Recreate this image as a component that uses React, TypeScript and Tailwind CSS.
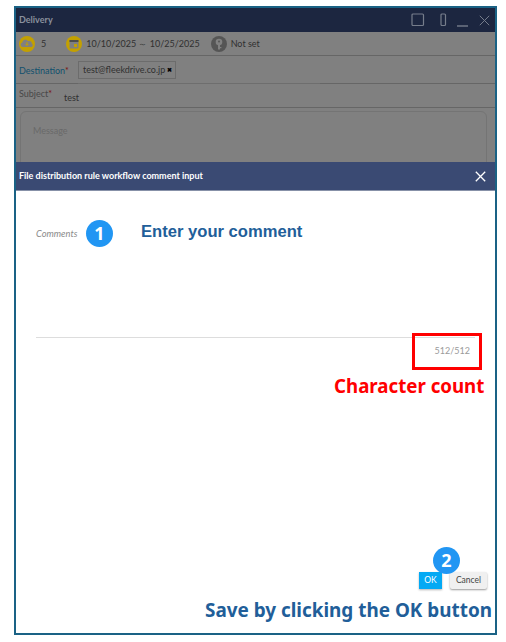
import React from "react";

const lato = "[font-family:Lato,'Noto_Sans',sans-serif]";
const note = "[font-family:'Noto_Sans','Noto_Sans_CJK_JP',sans-serif]";
const arial = "[font-family:'Liberation_Sans',Arial,sans-serif]";

function Badge({ n, className }: { n: string; className: string }) {
  return (
    <div className={`absolute w-[27px] h-[27px] rounded-full bg-[#2196f3] text-white flex items-center justify-center text-[18px] font-bold ${note} ${className}`}>
      {n}
    </div>
  );
}

export default function App() {
  return (
    <div className="w-[506px] h-[642px] bg-white pt-[6px] pl-[14px]">
      <div className={`relative w-[483px] h-[629px] border-2 border-[#1a6285] bg-white overflow-hidden ${lato}`}>
        {/* Dimmed window behind the dialog */}
        <div className="h-full bg-[#808080] flex flex-col">
          <div className="h-[24px] shrink-0 bg-[#1c2640] flex items-center pl-[3px] pr-[5px]">
            <span className="text-[9px] font-bold text-[#8a919d]">Delivery</span>
            <div className="ml-auto flex items-center text-[#767d8b]">
              <svg width="14" height="14" viewBox="0 0 14 14" fill="none" className="mr-[15px]">
                <rect x="1" y="1" width="11.5" height="11.5" rx="1" stroke="currentColor" strokeWidth="1.2" />
              </svg>
              <svg width="7" height="14" viewBox="0 0 7 14" fill="none" className="mr-[9px]">
                <rect x="1" y="1" width="4.5" height="11.5" rx="1" stroke="currentColor" strokeWidth="1.2" />
              </svg>
              <svg width="13" height="14" viewBox="0 0 13 14" fill="none" className="mr-[10px]">
                <path d="M1 13h11" stroke="currentColor" strokeWidth="1.4" />
              </svg>
              <svg width="11" height="11" viewBox="0 0 11 11" fill="none">
                <path d="M.8.8l9.4 9.4M10.2.8L.8 10.2" stroke="currentColor" strokeWidth="1" />
              </svg>
            </div>
          </div>

          <div className="h-[24px] shrink-0 border-b border-[#666] flex items-center pl-[3px] text-[9px] text-[#303030]">
            <svg width="16" height="16" viewBox="0 0 16 16">
              <circle cx="8" cy="8" r="8" fill="#c3a000" />
              <path d="M3.5 11a2.3 2.3 0 0 1-.2-4.5 3 3 0 0 1 5.6-1.4 2.8 2.8 0 0 1 4 2.6 1.8 1.8 0 0 1-.6 3.3z" fill="#808080" />
              <path d="M8 6v3M6.7 8L8 9.5 9.3 8" stroke="#c3a000" strokeWidth="1" fill="none" />
            </svg>
            <span className="ml-[6px]">5</span>
            <svg width="16" height="16" viewBox="0 0 16 16" className="ml-[20px]">
              <circle cx="8" cy="8" r="8" fill="#c3a000" />
              <rect x="3.5" y="4" width="9" height="8.5" rx="1" fill="#808080" />
              <rect x="3.5" y="4" width="9" height="2" fill="#4d4d4d" />
              <rect x="8" y="8" width="3" height="3" fill="#c3a000" />
            </svg>
            <span className="ml-[4px] whitespace-nowrap">10/10/2025 ～ 10/25/2025</span>
            <svg width="16" height="16" viewBox="0 0 16 16" className="ml-[11px]">
              <circle cx="8" cy="8" r="8" fill="#555" />
              <circle cx="8" cy="6" r="3.3" fill="#808080" />
              <circle cx="8" cy="5.4" r="1" fill="#555" />
              <rect x="7" y="8.5" width="2" height="5" fill="#808080" />
              <rect x="9" y="11" width="1.4" height="1.2" fill="#808080" />
            </svg>
            <span className="ml-[4px]">Not set</span>
          </div>

          <div className="h-[28px] shrink-0 border-b border-[#666] flex items-start pl-[3px] text-[9px]">
            <span className="mt-[8px] w-[59px] text-[#11506e]">
              Destination<span className="text-[#7a1010]">*</span>
            </span>
            <div className="mt-[5px] h-[23px] w-[242px] border-b border-[#6e6e6e]">
              <div className="w-[98px] h-[18px] border border-[#6c6c6c] flex items-center pl-[4px] text-[#303030] whitespace-nowrap">
                test@fleekdrive.co.jp
                <span className="ml-[2px] -mt-[2px] text-[6px] text-black font-bold">✖</span>
              </div>
            </div>
          </div>

          <div className="h-[24px] shrink-0 border-b border-[#666] flex items-start pl-[3px] text-[9px]">
            <span className="mt-[3px] w-[45px] text-[#484848]">
              Subject<span className="text-[#7a1010]">*</span>
            </span>
            <span className="mt-[7px] text-[#303030]">test</span>
          </div>

          <div className="mt-[3px] ml-[4px] mr-[8px] h-[80px] border border-[#747474] rounded-[6px] pl-[12px] pt-[12px] text-[9px] text-[#696969]">
            Message
          </div>
        </div>

        {/* Dialog */}
        <div className="absolute left-0 right-0 top-[154px] bottom-0 bg-white flex flex-col">
          <div className="h-[29px] shrink-0 bg-[#3a4a73] border-b border-[#8791a8] flex items-center pl-[3px] pr-[9px]">
            <span className="text-[9px] font-bold text-white">File distribution rule workflow comment input</span>
            <svg width="11" height="11" viewBox="0 0 11 11" fill="none" className="ml-auto">
              <path d="M.8.8l9.4 9.4M10.2.8L.8 10.2" stroke="#fff" strokeWidth="1.3" />
            </svg>
          </div>

          <div className="relative flex-1 px-[20px]">
            <div className="h-[147px] border-b border-[#dddddd] pt-[32px] leading-[16px]">
              <span className="italic text-[9.3px] text-[#8a8a8a]">Comments</span>
            </div>
            <div className="pt-[6px] pr-[5px] text-right text-[9px] text-[#9a9a9a]">512/512</div>

            <div className="absolute right-[8px] bottom-[44px] flex gap-[8px] text-[8.5px]">
              <div className="w-[23px] h-[17px] bg-[#03a9f4] text-white flex items-center justify-center shadow-[0_1px_2px_rgba(0,0,0,0.3)]">OK</div>
              <div className="w-[37px] h-[17px] bg-[#f0f0f0] text-[#444] flex items-center justify-center rounded-[2px] shadow-[0_1px_2px_rgba(0,0,0,0.4)]">Cancel</div>
            </div>
          </div>
        </div>

        {/* Annotations laid over the dialog */}
        <Badge n="1" className="left-[70px] top-[212px]" />
        <div className={`absolute left-[125px] top-[214px] text-[16.6px] leading-[20px] font-bold text-[#215e99] whitespace-nowrap ${arial}`}>
          Enter your comment
        </div>
        <div className="absolute left-[396px] top-[325px] w-[70px] h-[37px] border-[3px] border-[#ff0000]" />
        <div className={`absolute left-[318px] top-[366px] text-[18.7px] leading-[24px] font-bold text-[#ff0000] whitespace-nowrap ${note}`}>
          Character count
        </div>
        <Badge n="2" className="left-[417px] top-[539px]" />
        <div className={`absolute left-[189px] top-[590px] text-[18.9px] leading-[24px] font-bold text-[#215e99] whitespace-nowrap ${note}`}>
          Save by clicking the OK button
        </div>
      </div>
    </div>
  );
}
